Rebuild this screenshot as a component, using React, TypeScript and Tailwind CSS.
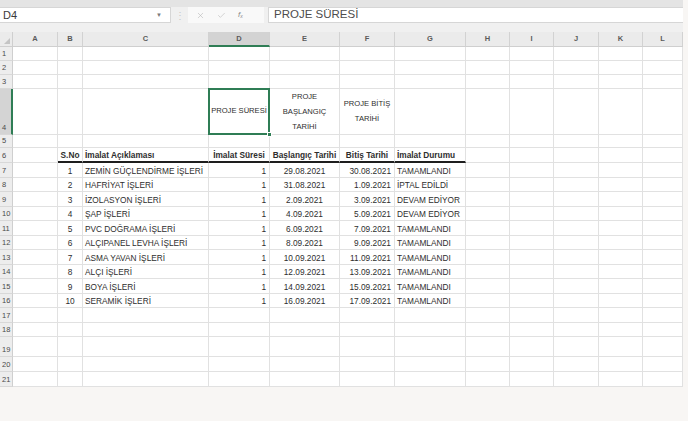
import React from 'react';
import { X, Check } from 'lucide-react';

interface Job {
  no: number;
  desc: string;
  start: string;
  end: string;
  status: string;
}

const JOBS: Job[] = [
  { no: 1, desc: 'ZEMİN GÜÇLENDİRME İŞLERİ', start: '29.08.2021', end: '30.08.2021', status: 'TAMAMLANDI' },
  { no: 2, desc: 'HAFRİYAT İŞLERİ', start: '31.08.2021', end: '1.09.2021', status: 'İPTAL EDİLDİ' },
  { no: 3, desc: 'İZOLASYON İŞLERİ', start: '2.09.2021', end: '3.09.2021', status: 'DEVAM EDİYOR' },
  { no: 4, desc: 'ŞAP İŞLERİ', start: '4.09.2021', end: '5.09.2021', status: 'DEVAM EDİYOR' },
  { no: 5, desc: 'PVC DOĞRAMA İŞLERİ', start: '6.09.2021', end: '7.09.2021', status: 'TAMAMLANDI' },
  { no: 6, desc: 'ALÇIPANEL LEVHA İŞLERİ', start: '8.09.2021', end: '9.09.2021', status: 'TAMAMLANDI' },
  { no: 7, desc: 'ASMA YAVAN İŞLERİ', start: '10.09.2021', end: '11.09.2021', status: 'TAMAMLANDI' },
  { no: 8, desc: 'ALÇI İŞLERİ', start: '12.09.2021', end: '13.09.2021', status: 'TAMAMLANDI' },
  { no: 9, desc: 'BOYA İŞLERİ', start: '14.09.2021', end: '15.09.2021', status: 'TAMAMLANDI' },
  { no: 10, desc: 'SERAMİK İŞLERİ', start: '16.09.2021', end: '17.09.2021', status: 'TAMAMLANDI' },
];

const LETTERS = ['A', 'B', 'C', 'D', 'E', 'F', 'G', 'H', 'I', 'J', 'K', 'L'];

// column widths: row header, then A..L
const W = [
  'w-[13px]',
  'w-[45px]',
  'w-[25px]',
  'w-[126px]',
  'w-[61px]',
  'w-[70px]',
  'w-[55px]',
  'w-[71px]',
  'w-[44px]',
  'w-[44px]',
  'w-[45px]',
  'w-[44px]',
  'w-[40px]',
];

const GRID = 'shrink-0 flex items-end pb-[1px] leading-[10px] whitespace-nowrap border-r border-b border-[#e1e1e1]';

function Cell({ col, className = '', children }: { col: number; className?: string; children?: React.ReactNode }) {
  return <div className={`${W[col]} ${GRID} ${className}`}>{children}</div>;
}

function Row({ n, h, active = false, children }: { n: number; h: string; active?: boolean; children?: React.ReactNode }) {
  return (
    <div className={`flex ${h}`}>
      <div
        className={`${W[0]} shrink-0 flex items-end pb-[1px] pl-[2px] leading-[10px] text-[7.5px] text-[#4a4a4a] border-b border-[#d8d8d8] ${
          active ? 'bg-[#d4d4d4] border-r-2 border-r-[#2f7d55]' : 'bg-[#ededed] border-r border-r-[#cfcfcf]'
        }`}
      >
        {n}
      </div>
      {children}
    </div>
  );
}

function Empty({ from = 1 }: { from?: number }) {
  return (
    <>
      {LETTERS.slice(from - 1).map((l, i) => (
        <Cell key={l} col={from + i} />
      ))}
    </>
  );
}

export default function App() {
  return (
    <div className="w-[688px] h-[421px] overflow-hidden bg-[#f8f6f4] font-['Liberation_Sans',sans-serif] text-[#2e2e2e]">
      <div className="w-[683px] bg-[#f0f0f0]">
        <div className="h-[7px] bg-[#e4e4e4]" />
        {/* formula bar */}
        <div className="flex h-[16px]">
          <div className="w-[171px] flex items-center pl-[3px] bg-white border-y border-r border-[#d6d6d6] text-[11px] text-[#3a3a3a]">
            D4
            <span className="ml-auto mr-[8px] text-[6px] text-[#7a7a7a]">▼</span>
          </div>
          <div className="w-[17px] flex items-center justify-center text-[10px] text-[#c8c8c8]">⋮</div>
          <div className="w-[76px] flex items-center gap-[12px] pl-[8px] bg-[#f9f9f9] text-[#b5b5b5]">
            <X size={9} strokeWidth={1.5} />
            <Check size={9} strokeWidth={1.5} />
            <span className="text-[8px] italic text-[#8a8a8a]">
              f<sub className="text-[5px]">x</sub>
            </span>
          </div>
          <div className="flex-1 ml-[4px] flex items-center pl-[5px] bg-white border-y border-l border-[#d6d6d6] text-[11.5px] text-[#4d4d4d]">
            PROJE SÜRESİ
          </div>
        </div>
        <div className="h-[9px]" />
      </div>

      {/* sheet */}
      <div className="w-[683px] bg-white text-[8.3px]">
        {/* column headers */}
        <div className="flex h-[15px] bg-[#ebebeb] text-[7.5px] font-bold text-[#5a5a5a]">
          <div className={`${W[0]} shrink-0 relative border-r border-b border-[#cfcfcf]`}>
            <div className="absolute right-[2px] bottom-[2px] w-0 h-0 border-l-[6px] border-l-transparent border-b-[6px] border-b-[#c4c4c4]" />
          </div>
          {LETTERS.map((l, i) => (
            <div
              key={l}
              className={`${W[i + 1]} shrink-0 flex items-center justify-center border-r border-[#d2d2d2] ${
                l === 'D' ? 'bg-[#d3d3d3] border-b-2 border-b-[#2f7d55]' : 'border-b border-b-[#cfcfcf]'
              }`}
            >
              {l}
            </div>
          ))}
        </div>

        <Row n={1} h="h-[14px]"><Empty /></Row>
        <Row n={2} h="h-[14px]"><Empty /></Row>
        <Row n={3} h="h-[14px]"><Empty /></Row>

        <Row n={4} h="h-[46px]" active>
          <Cell col={1} />
          <Cell col={2} />
          <Cell col={3} />
          <Cell col={4} className="relative !items-center justify-center text-[7.6px]">
            PROJE SÜRESİ
            <div className="absolute -left-[1px] -top-[1px] right-[-1px] bottom-[-1px] border-2 border-[#2f7d55]" />
            <div className="absolute right-[-3px] bottom-[-3px] w-[5px] h-[5px] bg-[#2f7d55] border border-white" />
          </Cell>
          <Cell col={5} className="!items-center justify-center text-center text-[7.6px] leading-[15px]">
            <div>
              PROJE
              <br />
              BAŞLANGIÇ
              <br />
              TARİHİ
            </div>
          </Cell>
          <Cell col={6} className="!items-center justify-center text-center text-[7.6px] leading-[15px]">
            <div>
              PROJE BİTİŞ
              <br />
              TARİHİ
            </div>
          </Cell>
          <Empty from={7} />
        </Row>

        <Row n={5} h="h-[13px]"><Empty /></Row>

        <Row n={6} h="h-[15px]">
          <Cell col={1} />
          <Cell col={2} className="justify-center font-bold border-b-2 border-b-[#1e1e1e]">S.No</Cell>
          <Cell col={3} className="pl-[2px] font-bold border-b-2 border-b-[#1e1e1e]">İmalat Açıklaması</Cell>
          <Cell col={4} className="justify-center font-bold border-b-2 border-b-[#1e1e1e]">İmalat Süresi</Cell>
          <Cell col={5} className="justify-center font-bold border-b-2 border-b-[#1e1e1e]">Başlangıç Tarihi</Cell>
          <Cell col={6} className="justify-center font-bold border-b-2 border-b-[#1e1e1e]">Bitiş Tarihi</Cell>
          <Cell col={7} className="pl-[2px] font-bold border-b-2 border-b-[#1e1e1e]">İmalat Durumu</Cell>
          <Empty from={8} />
        </Row>

        {JOBS.map((j) => (
          <Row key={j.no} n={j.no + 6} h="h-[14.5px]">
            <Cell col={1} />
            <Cell col={2} className="justify-center">{j.no}</Cell>
            <Cell col={3} className="pl-[2px]">{j.desc}</Cell>
            <Cell col={4} className="justify-end pr-[3px]">1</Cell>
            <Cell col={5} className="justify-center">{j.start}</Cell>
            <Cell col={6} className="justify-end pr-[3px]">{j.end}</Cell>
            <Cell col={7} className="pl-[2px]">{j.status}</Cell>
            <Empty from={8} />
          </Row>
        ))}

        <Row n={17} h="h-[14.5px]"><Empty /></Row>
        <Row n={18} h="h-[14.5px]"><Empty /></Row>
        <Row n={19} h="h-[20px]"><Empty /></Row>
        <Row n={20} h="h-[15px]"><Empty /></Row>
        <Row n={21} h="h-[15px]"><Empty /></Row>
      </div>
    </div>
  );
}
